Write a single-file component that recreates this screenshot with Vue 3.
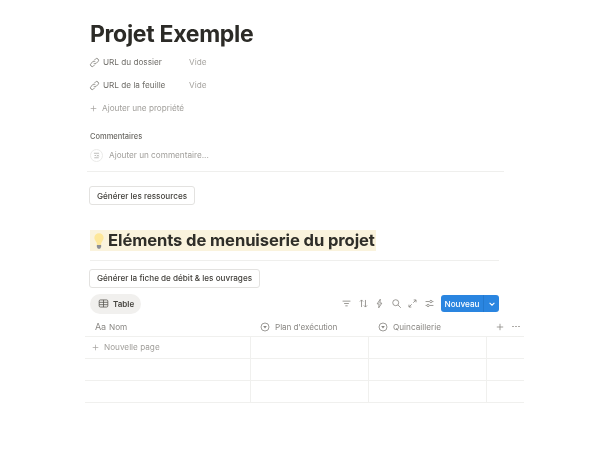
<script setup>
const rows = [0, 1]
</script>

<template>
  <div class="page">
    <h1 class="title">Projet Exemple</h1>
    <div class="prop">
      <span class="prop-name">
        <svg class="ico" viewBox="0 0 16 16"><path d="M6.800 9.200a2.600 2.600 0 0 0 3.700 0l2.600-2.600a2.600 2.600 0 0 0-3.700-3.700L8.200 4.100M9.200 6.800a2.600 2.600 0 0 0-3.700 0l-2.600 2.600a2.600 2.600 0 0 0 3.700 3.700l1.200-1.200"/></svg>
        URL du dossier
      </span>
      <span class="empty">Vide</span>
    </div>
    <div class="prop prop2">
      <span class="prop-name">
        <svg class="ico" viewBox="0 0 16 16"><path d="M6.800 9.200a2.600 2.600 0 0 0 3.700 0l2.600-2.600a2.600 2.600 0 0 0-3.700-3.700L8.200 4.100M9.200 6.800a2.600 2.600 0 0 0-3.700 0l-2.600 2.600a2.600 2.600 0 0 0 3.700 3.700l1.200-1.200"/></svg>
        URL de la feuille
      </span>
      <span class="empty">Vide</span>
    </div>
    <div class="add-prop">
      <svg class="plus" viewBox="0 0 10 10"><path d="M5 1v8M1 5h8"/></svg>
      Ajouter une propriété
    </div>
    <div class="comments-label">Commentaires</div>
    <div class="comment-row">
      <span class="avatar">
        <svg viewBox="0 0 14 14"><path d="M3 3.500h8M4 7h2.500M8 6l2.500 2.500M10.500 6L8 8.500M3.500 10.500h7" /></svg>
      </span>
      Ajouter un commentaire...
    </div>
    <div class="rule rule-a"></div>
    <button class="btn btn-a">Générer les ressources</button>
    <h2 class="heading"><span class="mark"><span class="bulb">
      <svg viewBox="0 0 14 24"><path class="glass" d="M7 1a6.500 6.500 0 0 0-6.500 6.500c0 2.900 2 4.600 3 6.700.5 1 .5 2 .5 3.300h6c0-1.300 0-2.300.5-3.300 1-2.100 3-3.800 3-6.700A6.500 6.500 0 0 0 7 1z"/><path class="base" d="M4 17.500h6v3l-1.500 2.500h-3L4 20.500z"/></svg>
    </span>Eléments de menuiserie du projet</span></h2>
    <div class="rule rule-b"></div>
    <button class="btn btn-b">Générer la fiche de débit &amp; les ouvrages</button>
    <div class="toolbar">
      <span class="tab">
        <svg class="tab-ico" viewBox="0 0 14 14"><rect x="1.500" y="2.500" width="11" height="9" rx="1.500"/><path d="M1.500 5.500h11M1.500 8.500h11M7 2.500v9"/></svg>
        Table
      </span>
      <div class="tools">
        <svg class="tool" viewBox="0 0 14 14"><path d="M2 4h10M4 7h6M5.500 10h3"/></svg>
        <svg class="tool" viewBox="0 0 14 14"><path d="M4.500 11.500V2.500M2.500 4.500l2-2 2 2M9.500 2.500v9M7.500 9.500l2 2 2-2"/></svg>
        <svg class="tool" viewBox="0 0 14 14"><path d="M8 1.500L4 7.500h2.500L6 12.500l4-6H7.500z"/></svg>
        <svg class="tool" viewBox="0 0 14 14"><circle cx="6" cy="6" r="3.800"/><path d="M9 9l3.500 3.500"/></svg>
        <svg class="tool" viewBox="0 0 14 14"><path d="M8.500 2.500h3v3M11.500 2.500L8 6M5.500 11.500h-3v-3M2.500 11.500L6 8"/></svg>
        <svg class="tool" viewBox="0 0 14 14"><path d="M2 4.500h5M10.500 4.500H12M2 9.500h1.500M7 9.500h5"/><circle cx="8.800" cy="4.500" r="1.500"/><circle cx="5.200" cy="9.500" r="1.500"/></svg>
        <span class="new">
          <span class="new-label">Nouveau</span>
          <span class="new-caret"><svg viewBox="0 0 10 10"><path d="M2 3.500l3 3 3-3"/></svg></span>
        </span>
      </div>
    </div>
    <div class="table">
      <div class="row head">
        <div class="cell c1"><span class="aa">Aa</span>Nom</div>
        <div class="cell c2">
          <svg class="sel" viewBox="0 0 12 12"><circle cx="6" cy="6" r="4.800"/><path class="tri" d="M3.800 4.800h4.400L6 7.800z"/></svg>
          <span class="plan">Plan d'exécution</span>
        </div>
        <div class="cell c3">
          <svg class="sel" viewBox="0 0 12 12"><circle cx="6" cy="6" r="4.800"/><path class="tri" d="M3.800 4.800h4.400L6 7.800z"/></svg>
          Quincaillerie
        </div>
        <div class="cell c4">
          <svg class="hplus" viewBox="0 0 10 10"><path d="M5 1v8M1 5h8"/></svg>
          <span class="dots"><i></i><i></i><i></i></span>
        </div>
      </div>
      <div class="row">
        <div class="cell c1 newpage">
          <svg class="plus" viewBox="0 0 10 10"><path d="M5 1v8M1 5h8"/></svg>
          Nouvelle page
        </div>
        <div class="cell c2"></div><div class="cell c3"></div><div class="cell c4"></div>
      </div>
      <div class="row" v-for="r in rows" :key="r">
        <div class="cell c1"></div><div class="cell c2"></div><div class="cell c3"></div><div class="cell c4"></div>
      </div>
    </div>
  </div>
</template>

<style scoped>
.page {
  width: 600px;
  height: 450px;
  box-sizing: border-box;
  padding: 19px 0 0 90px;
  background: #fff;
  font-family: Inter, "Liberation Sans", sans-serif;
  color: #37352f;
  overflow: hidden;
  filter: blur(0.45px);
}
.title {
  margin: 0;
  font-size: 23px;
  line-height: 30px;
  font-weight: 700;
  color: #2c2b27;
  letter-spacing: -0.3px;
}
.prop {
  display: flex;
  margin-top: 3px;
  height: 20px;
  align-items: center;
  font-size: 8.200px;
}
.prop-name {
  width: 99px;
  display: flex;
  align-items: center;
  gap: 3px;
  color: #6f6d68;
}
.ico {
  width: 11px;
  height: 11px;
  margin-left: -1px;
  fill: none;
  stroke: #85837e;
  stroke-width: 1.300;
}
.empty { color: #a8a6a2; margin-top: -1px; }
.add-prop {
  display: flex;
  align-items: center;
  gap: 5px;
  margin-top: 3px;
  height: 20px;
  font-size: 8.200px;
  color: #a09e9a;
}
.plus {
  width: 7px;
  height: 7px;
  fill: none;
  stroke: #a3a19d;
  stroke-width: 1;
}
.comments-label {
  margin-top: 14px;
  font-size: 7.500px;
  line-height: 10px;
  font-weight: 500;
  color: #6c6a65;
}
.comment-row {
  display: flex;
  align-items: center;
  gap: 6px;
  margin-top: 5px;
  height: 16px;
  font-size: 8.200px;
  color: #a09e9a;
}
.avatar {
  width: 13px;
  height: 13px;
  border-radius: 50%;
  border: 1px solid #ebebe9;
  box-sizing: border-box;
  display: flex;
  align-items: center;
  justify-content: center;
}
.avatar svg {
  width: 9px;
  height: 9px;
  fill: none;
  stroke: #9a9994;
  stroke-width: 1;
}
.rule {
  height: 1px;
  background: #efefed;
}
.rule-a {
  width: 417px;
  margin: 8px 0 0 -3px;
}
.btn {
  display: block;
  box-sizing: border-box;
  height: 19px;
  padding: 0 7px;
  margin-left: -1px;
  background: #fff;
  border: 1px solid #e3e2e0;
  border-radius: 3px;
  font-family: inherit;
  font-size: 8.150px;
  font-weight: 500;
  color: #3f3d38;
}
.btn-a { margin-top: 14px; }
.heading {
  margin: 25px 0 0;
  font-size: 16.600px;
  line-height: 21px;
  font-weight: 700;
  color: #2f2e29;
}
.mark {
  display: inline-flex;
  align-items: center;
  background: #faf3dd;
  padding-right: 1px;
  letter-spacing: -0.1px;
}
.bulb {
  width: 18px;
  height: 21px;
  display: flex;
  align-items: center;
  justify-content: center;
}
.bulb svg { width: 10px; height: 18px; }
.glass { fill: #fde79a; }
.base { fill: #8c8f96; }
.rule-b {
  width: 409px;
  margin-top: 5px;
}
.btn-b { margin-top: 8px; }
.toolbar {
  display: flex;
  align-items: center;
  width: 409px;
  height: 20px;
  margin-top: 6px;
}
.tab {
  display: flex;
  align-items: center;
  gap: 4px;
  height: 20px;
  padding: 0 7px 0 8px;
  border-radius: 10px;
  background: #f1f0ee;
  font-size: 8px;
  font-weight: 600;
  color: #45433e;
}
.tab-ico {
  width: 11px;
  height: 11px;
  fill: none;
  stroke: #55534e;
  stroke-width: 1;
}
.tools {
  margin-left: auto;
  display: flex;
  align-items: center;
  gap: 5.500px;
}
.tool {
  width: 11px;
  height: 11px;
  fill: none;
  stroke: #8d8b87;
  stroke-width: 1.100;
}
.new {
  display: flex;
  height: 17px;
  margin-left: 1px;
  border-radius: 3px;
  overflow: hidden;
  background: #2a85e0;
  color: #fff;
  font-size: 8.200px;
  font-weight: 500;
}
.new-label {
  width: 43px;
  box-sizing: border-box;
  text-align: center;
  line-height: 18px;
  border-right: 1px solid #2379cf;
}
.new-caret {
  width: 15px;
  display: flex;
  align-items: center;
  justify-content: center;
}
.new-caret svg {
  width: 8px;
  height: 8px;
  fill: none;
  stroke: #fff;
  stroke-width: 1.300;
}
.table {
  width: 439px;
  margin: 1px 0 0 -5px;
  border-bottom: 1px solid #f0f0ee;
}
.row {
  display: flex;
  height: 21px;
  border-top: 1px solid #f0f0ee;
}
.row.head {
  height: 21px;
  border-top: 0;
}
.head .cell { padding-top: 3px; }
.cell {
  box-sizing: border-box;
  display: flex;
  align-items: center;
  font-size: 8.200px;
  color: #8a8884;
  border-right: 1px solid #f0f0ee;
}
.c1 { width: 166px; padding-left: 10px; }
.c2 { width: 118px; padding-left: 9px; gap: 5px; }
.c3 { width: 118px; padding-left: 9px; gap: 5px; }
.c4 { width: 37px; border-right: 0; padding-left: 9px; }
.head .c1, .head .c2, .head .c3, .head .c4 { border-right-color: transparent; }
.plan { letter-spacing: -0.1px; }
.aa {
  width: 14px;
  font-size: 9px;
  letter-spacing: -0.3px;
}
.sel {
  width: 10px;
  height: 10px;
  fill: none;
  stroke: #8a8884;
  stroke-width: 1;
}
.tri { fill: #8a8884; stroke: none; }
.hplus {
  width: 8px;
  height: 8px;
  fill: none;
  stroke: #8a8884;
  stroke-width: 1;
}
.dots {
  display: flex;
  gap: 1.500px;
  margin-left: 8px;
}
.dots i {
  width: 1.500px;
  height: 1.500px;
  border-radius: 50%;
  background: #a3a19d;
}
.newpage {
  gap: 5px;
  padding-left: 7px;
  color: #a09e9a;
}
</style>
